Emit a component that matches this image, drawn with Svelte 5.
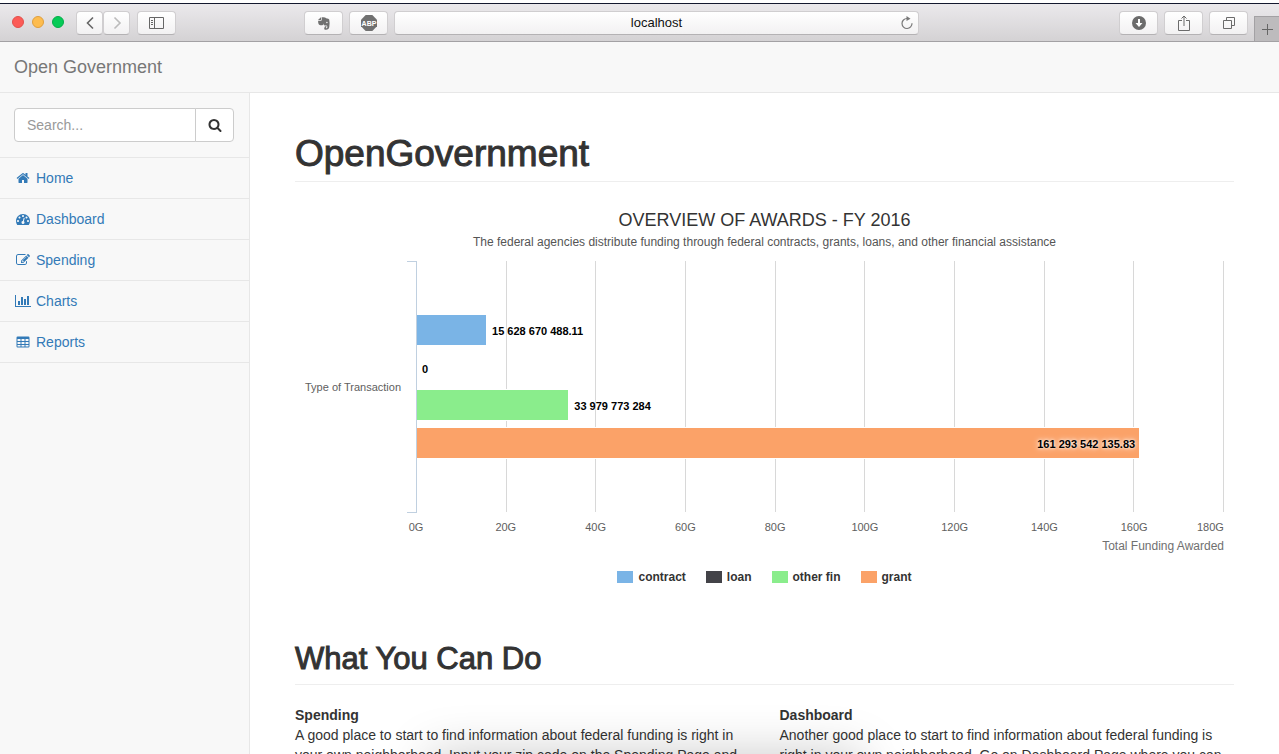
<script>
  const awards = [
    { name: 'contract', value: 15628670488.11, label: '15 628 670 488.11', color: '#7ab4e6' },
    { name: 'loan', value: 0, label: '0', color: '#434348' },
    { name: 'other fin', value: 33979773284, label: '33 979 773 284', color: '#8aed8c' },
    { name: 'grant', value: 161293542135.83, label: '161 293 542 135.83', color: '#fba268', inside: true }
  ];
  const max = 180e9;
  const ticks = Array.from({ length: 10 }, (_, i) => `${i * 20}G`);
  const nav = [
    { text: 'Home', box: '0 0 1792 1792', d: 'M1472 992v480q0 26-19 45t-45 19h-384v-384h-256v384h-384q-26 0-45-19t-19-45v-480q0-1 .5-3t.5-3l575-474 575 474q1 2 1 6zm223-69l-62 74q-8 9-21 11h-3q-13 0-21-7l-692-577-692 577q-12 8-24 7-13-2-21-11l-62-74q-8-10-7-23.500t11-21.500l719-599q32-26 76-26t76 26l244 204v-195q0-14 9-23t23-9h192q14 0 23 9t9 23v408l219 182q10 8 11 21.500t-7 23.500z' },
    { text: 'Dashboard', box: '0 0 1792 1792', d: 'M384 1152q0-53-37.500-90.500t-90.500-37.500-90.500 37.500-37.500 90.500 37.500 90.500 90.500 37.500 90.500-37.500 37.500-90.500zm192-448q0-53-37.500-90.500t-90.500-37.500-90.500 37.500-37.500 90.500 37.500 90.500 90.500 37.500 90.500-37.500 37.500-90.500zm428 481l101-382q6-26-7.500-48.500t-38.500-29.500-48 6.500-30 39.500l-101 382q-60 5-107 43.500t-63 98.500q-20 77 20 146t117 89 146-20 89-117q16-60-6-117t-72-91zm660-33q0-53-37.500-90.500t-90.500-37.500-90.500 37.500-37.500 90.500 37.500 90.500 90.500 37.500 90.500-37.500 37.500-90.500zm-640-640q0-53-37.500-90.500t-90.500-37.500-90.500 37.500-37.500 90.500 37.500 90.500 90.500 37.500 90.500-37.500 37.500-90.500zm448 192q0-53-37.500-90.500t-90.500-37.500-90.500 37.500-37.500 90.500 37.500 90.500 90.500 37.500 90.500-37.500 37.500-90.500zm320 448q0 261-141 483-19 29-54 29h-1402q-35 0-54-29-141-221-141-483 0-182 71-348t191-286 286-191 348-71 348 71 286 191 191 286 71 348z' },
    { text: 'Spending', box: '0 0 1792 1792', d: 'M888 1184l116-116-152-152-116 116v56h96v96h56zm440-720q-16-16-33 1l-350 350q-17 17-1 33t33-1l350-350q17-17 1-33zm80 594v190q0 119-84.500 203.500t-203.500 84.500h-832q-119 0-203.500-84.500t-84.500-203.500v-832q0-119 84.500-203.500t203.500-84.500h832q63 0 117 25 15 7 18 23 3 17-9 29l-49 49q-14 14-32 8-23-6-45-6h-832q-66 0-113 47t-47 113v832q0 66 47 113t113 47h832q66 0 113-47t47-113v-126q0-13 9-22l64-64q15-15 35-7t20 29zm-96-738l288 288-672 672h-288v-288zm444 132l-92 92-288-288 92-92q28-28 68-28t68 28l152 152q28 28 28 68t-28 68z' },
    { text: 'Charts', wide: true, box: '0 0 2048 1792', d: 'M640 896v512h-256v-512h256zm384-512v1024h-256v-1024h256zm1024 1152v128h-2048v-1536h128v1408h1920zm-640-896v768h-256v-768h256zm384-384v1152h-256v-1152h256z' },
    { text: 'Reports', box: '0 0 14 14', d: 'M1.700 1.500h10.600q1.200 0 1.200 1.200v8.600q0 1.200-1.200 1.200H1.700Q.5 12.500.5 11.300V2.700q0-1.200 1.200-1.200zM1.500 4v2h3V4zm4 0v2h3V4zm4 0v2h3V4zm-8 3v2h3V7zm4 0v2h3V7zm4 0v2h3V7zm-8 3v1.500h3V10zm4 0v1.500h3V10zm4 0v1.500h3V10z' }
  ];
  const sections = [
    { title: 'Spending', body: 'A good place to start to find information about federal funding is right in your own neighborhood. Input your zip code on the Spending Page and' },
    { title: 'Dashboard', body: 'Another good place to start to find information about federal funding is right in your own neighborhood. Go on Dashboard Page where you can' }
  ];
</script>

<div class="window">
  <header class="toolbar">
    <div class="left">
      <div class="lights"><i class="red"></i><i class="amber"></i><i class="green"></i></div>
      <div class="pair">
        <button aria-label="Back"><svg width="12" height="14" viewBox="0 0 12 14"><path d="M9 1.500 3.500 7 9 12.500" fill="none" stroke="#666" stroke-width="1.600" /></svg></button>
        <button aria-label="Forward"><svg width="12" height="14" viewBox="0 0 12 14"><path d="M3.500 1.500 9 7l-5.500 5.500" fill="none" stroke="#bbb" stroke-width="1.600" /></svg></button>
      </div>
      <button class="tool" aria-label="Sidebar"><svg width="15" height="12" viewBox="0 0 15 12"><path d="M.5.5h14v11H.5zM5.500.5v11M2 3.500h2M2 5.500h2M2 7.500h2" fill="none" stroke="#666" /></svg></button>
    </div>
    <div class="center">
      <button class="tool" aria-label="Evernote"><svg width="12" height="13" viewBox="0 0 12 13"><path d="M3.200 0 0 3.100h2.600q.6 0 .6-.6zM3.900.3v2.300q0 1.200-1.200 1.200H.1q0 3.700 1.500 4.200 2.300.7 3.500-.2l.2-1.200q.2 2 1.500 2h1.500q1 0 1 .9v1.100q0 .7-.8.7-.7 0-.7-.6 0-.5.6-.5V8.900q-2-.1-2 1.800Q5.500 12.700 8 12.700q2.800 0 3.300-2.700.7-4.300-.1-7.600-.3-.9-3.100-1.100Q7.500 0 3.900.3z" fill="#707070" /><circle cx="8.900" cy="5.500" r=".8" fill="#eee" /></svg></button>
      <button class="tool" aria-label="Adblock Plus"><svg width="16" height="16" viewBox="0 0 16 16"><path d="M4.700 0h6.600L16 4.700v6.600L11.300 16H4.700L0 11.300V4.700z" fill="#707070" /><text x="8" y="11" text-anchor="middle" font-family="Liberation Sans" font-size="7" font-weight="700" fill="#fff">ABP</text></svg></button>
      <div class="address"><span>localhost</span><button class="reload" aria-label="Reload"><svg width="14" height="14" viewBox="0 0 14 14"><path d="M7 2.500A5 5 0 1 0 12 7.300" fill="none" stroke="#777" stroke-width="1.200" /><path d="M6.500 0v5l4-2.200z" fill="#777" /></svg></button></div>
    </div>
    <div class="right">
      <button class="tool" aria-label="Downloads"><svg width="14" height="14" viewBox="0 0 14 14"><circle cx="7" cy="7" r="7" fill="#6b6b6b" /><path d="M6 3h2v4h2.500L7 11 3.500 7H6z" fill="#fff" /></svg></button>
      <button class="tool" aria-label="Share"><svg width="12" height="16" viewBox="0 0 12 16"><path d="M4 5.500H.5v10h11v-10H8M6 11V1M3.500 3.500 6 1l2.500 2.500" fill="none" stroke="#6b6b6b" /></svg></button>
      <button class="tool" aria-label="Tabs"><svg width="12" height="12" viewBox="0 0 12 12"><path d="M.5 3.500h8v8h-8zM3.500 3V.5h8v8H9" fill="none" stroke="#6b6b6b" /></svg></button>
      <button class="plus" aria-label="New tab"><svg width="11" height="11" viewBox="0 0 11 11"><path d="M5.500 0v11M0 5.500h11" stroke="#666" /></svg></button>
    </div>
  </header>

  <nav class="brandbar"><a href="#home">Open Government</a></nav>

  <div class="page">
    <aside>
      <form class="search">
        <input type="text" aria-label="Search" placeholder="Search..." />
        <button type="button" aria-label="Search"><svg width="14" height="14" viewBox="0 0 1792 1792"><path fill="#333" d="M1216 832q0-185-131.500-316.500t-316.500-131.500-316.500 131.500-131.500 316.500 131.500 316.500 316.500 131.500 316.500-131.500 131.500-316.500zm512 832q0 52-38 90t-90 38q-54 0-90-38l-343-342q-179 124-399 124-143 0-273.500-55.500t-225-150-150-225-55.500-273.500 55.500-273.500 150-225 225-150 273.500-55.500 273.500 55.500 225 150 150 225 55.500 273.500q0 220-124 399l343 343q37 37 37 90z" /></svg></button>
      </form>
      <ul>
        {#each nav as item}
          <li><a href="#{item.text.toLowerCase()}">
            <span class="icon"><svg width={item.wide ? 16 : 14} height="14" viewBox={item.box}><path d={item.d} fill="currentColor" fill-rule="evenodd" /></svg></span>{item.text}
          </a></li>
        {/each}
      </ul>
    </aside>

    <main>
      <h1>OpenGovernment</h1>

      <figure>
        <figcaption>
          <strong>OVERVIEW OF AWARDS - FY 2016</strong>
          <span>The federal agencies distribute funding through federal contracts, grants, loans, and other financial assistance</span>
        </figcaption>
        <div class="chart">
          <div class="category">Type of Transaction</div>
          <div class="bracket"></div>
          <div class="plot">
            <div class="lines">{#each ticks.slice(1) as tick (tick)}<i></i>{/each}</div>
            <div class="bars">
              {#each awards as a}
                <div class="row">
                  {#if a.value}<div class="bar" style="width: {(a.value / max) * 100}%; background: {a.color}">{#if a.inside}{a.label}{/if}</div>{/if}
                  {#if !a.inside}<span>{a.label}</span>{/if}
                </div>
              {/each}
            </div>
          </div>
          <div class="ticks">{#each ticks as tick}<span>{tick}</span>{/each}</div>
          <div class="axis-title">Total Funding Awarded</div>
        </div>
        <div class="legend">
          {#each awards as a}<span><i style="background: {a.color}"></i>{a.name}</span>{/each}
        </div>
      </figure>

      <h2>What You Can Do</h2>
      <div class="sections">
        {#each sections as s}
          <section><strong>{s.title}</strong><p>{s.body}</p></section>
        {/each}
      </div>
    </main>
  </div>
  <div class="shade"></div>
</div>

<style>
  :global(body) { margin: 0; overflow: hidden; background: #fff; }
  .window, .window * { box-sizing: border-box; }
  .window { position: relative; height: 100vh; display: flex; flex-direction: column; overflow: hidden; padding-top: 3px; font: 14px/20px "Liberation Sans", Arial, sans-serif; color: #333; }
  button { font: inherit; padding: 0; cursor: pointer; }
  svg { display: block; }
  a { text-decoration: none; }

  .toolbar { flex: none; height: 39px; display: grid; grid-template-columns: 304fr 615px 360fr; border-top: 1px solid #14192f; border-bottom: 1px solid #a3a1a4; background: linear-gradient(#ebe9ec, #d4d2d4); }
  .left, .center, .right, .pair, .lights { display: flex; }
  .left, .center, .right { padding-top: 7px; align-items: flex-start; }
  .lights { gap: 8px; padding: 5px 12px 0; }
  .lights i { width: 12px; height: 12px; border-radius: 50%; border: 1px solid transparent; }
  .lights .red { background: #fc5b57; border-color: #e2504c; }
  .lights .amber { background: #fdbc4f; border-color: #df9f3e; }
  .lights .green { background: #06cb57; border-color: #05ad4b; }
  .toolbar button { display: flex; align-items: center; justify-content: center; }
  .pair button, .tool, .address { height: 24px; border: 1px solid #d0ced0; border-bottom-color: #b4b2b4; border-radius: 4px; background: linear-gradient(#fff, #f2f1f2); }
  .pair button { width: 27px; }
  .left .tool { margin-left: 7px; }
  .tool { width: 39px; flex: none; }
  .center { gap: 6px; }
  .address { flex: 1; display: flex; align-items: center; padding: 0 4px 0 18px; font-size: 13px; color: #111; }
  .address span { flex: 1; text-align: center; }
  .address .reload { width: 14px; height: 14px; border: 0; background: none; }
  .right { justify-content: flex-end; gap: 6px; }
  .right .plus { width: 25px; height: 25px; align-self: flex-end; border: solid #a3a1a4; border-width: 1px 0 0 1px; background: #bdbbbd; }

  .brandbar { flex: none; height: 51px; padding: 15px 14px; background: #f8f8f8; border-bottom: 1px solid #e7e7e7; }
  .brandbar a { font-size: 18px; color: #777; }
  .page { flex: 1; min-height: 0; display: flex; }
  aside { flex: none; width: 250px; background: #f8f8f8; border-right: 1px solid #e7e7e7; }
  .search { display: flex; padding: 15px 15px 15px 14px; border-bottom: 1px solid #e7e7e7; }
  .search input { flex: 1; min-width: 0; height: 34px; padding: 6px 12px; border: 1px solid #ccc; border-radius: 4px 0 0 4px; font: inherit; background: #fff; }
  .search input::placeholder { color: #999; opacity: 1; }
  .search button { width: 39px; margin-left: -1px; display: flex; align-items: center; justify-content: center; border: 1px solid #ccc; border-radius: 0 4px 4px 0; background: #fff; }
  ul { list-style: none; margin: 0; padding: 0; }
  li { border-bottom: 1px solid #e7e7e7; }
  li a { display: flex; align-items: center; gap: 4px; padding: 10px 14px; color: #337ab7; }
  .icon { width: 18px; display: flex; justify-content: center; }

  main { flex: 1; min-width: 0; padding: 41px 45px 0; }
  h1, h2 { margin: 0; font-weight: 400; border-bottom: 1px solid #eee; -webkit-text-stroke: 1px #333; }
  h1 { font-size: 37px; line-height: 40px; padding-bottom: 7px; }
  h2 { font-size: 31px; line-height: 33px; padding-bottom: 9px; }

  figure { margin: 0 0 55px; padding-top: 27px; }
  figcaption { display: flex; flex-direction: column; align-items: center; }
  figcaption strong { font-size: 18px; line-height: 22px; font-weight: 400; color: #333; }
  figcaption span { font-size: 12px; line-height: 22px; color: #555; }
  .chart { display: grid; grid-template-columns: 112px 9px 1fr; margin: 8px 10px 0 0; }
  .category { align-self: center; padding-left: 10px; font-size: 11px; color: #606060; white-space: nowrap; }
  .bracket { border: solid #c0d0e0; border-width: 1px 0; }
  .plot { display: grid; border-left: 1px solid #c0d0e0; height: 252px; }
  .lines, .bars { grid-area: 1 / 1; }
  .lines { display: grid; grid-template-columns: repeat(9, 1fr); padding-bottom: 1px; }
  .lines i { border-right: 1px solid #d8d8d8; }
  .bars { display: flex; flex-direction: column; justify-content: space-between; padding: 53px 0 54px; }
  .row { height: 32px; display: flex; align-items: center; gap: 5px; font-size: 11px; font-weight: 700; color: #000; }
  .row span { padding-top: 2px; text-shadow: 0 0 3px #fff; }
  .row > span:only-child { padding-left: 5px; }
  .bar { height: 32px; padding: 2px 4px 0 0; display: flex; align-items: center; justify-content: flex-end; border: solid #fff; border-width: 1px 1px 1px 0; text-shadow: 0 0 3px #fff, 0 0 6px #fff; }
  .ticks { grid-column: 3; display: flex; justify-content: space-between; padding-top: 4px; font-size: 11px; color: #606060; }
  .ticks span { width: 0; display: flex; justify-content: center; }
  .ticks span:last-child { justify-content: flex-end; }
  .axis-title { grid-column: 3; text-align: right; font-size: 12px; line-height: 18px; color: #707070; }
  .legend { display: flex; justify-content: center; gap: 20px; margin-top: 12px; font-size: 12px; font-weight: 700; }
  .legend span { display: flex; align-items: center; gap: 5px; }
  .legend i { width: 16px; height: 12px; }

  .sections { display: grid; grid-template-columns: 1fr 1fr; gap: 30px; padding-top: 20px; }
  p { margin: 0; }
  .shade { position: absolute; left: 34%; right: 33%; bottom: -60px; height: 54px; pointer-events: none; box-shadow: 0 0 50px 5px rgba(0, 0, 0, .22); }
</style>
